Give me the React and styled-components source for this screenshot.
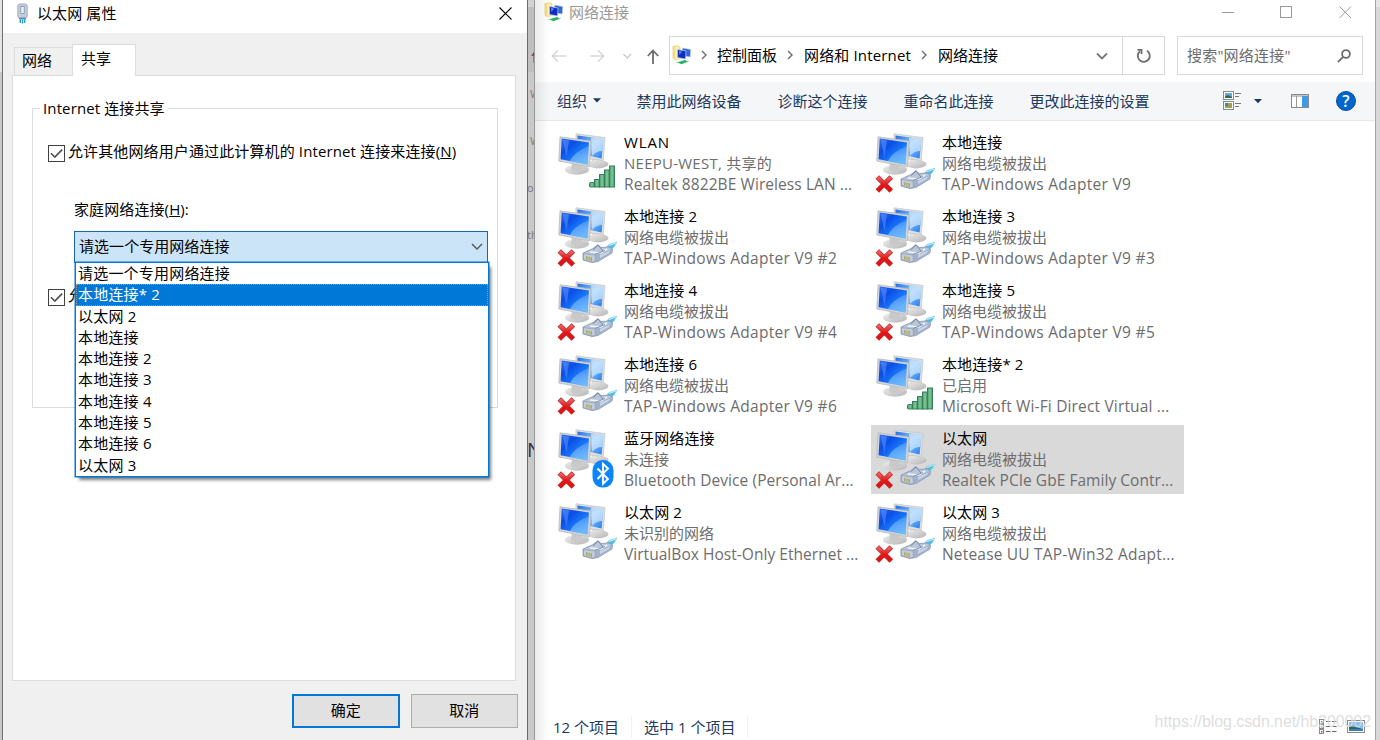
import React, { useState } from 'react';
import styled, { createGlobalStyle, css } from 'styled-components';

const GlobalStyle = createGlobalStyle`
  * {
    box-sizing: border-box;
  }
  body {
    margin: 0;
    font-family: "Open Sans", "Noto Sans CJK SC", sans-serif;
    font-size: 15px;
    color: #000000;
    overflow: hidden;
  }
  svg {
    display: block;
    flex-shrink: 0;
  }
`;

const Desktop = styled.div`
  display: flex;
  width: 1380px;
  height: 740px;
  overflow: hidden;
  background-color: #c6c6c6;
`;

const LeftEdge = styled.div`
  width: 2px;
  background: linear-gradient(#e4e4e4 0 72px, #c9c9c9 72px);
`;

/* ---------- properties dialog ---------- */

const Dialog = styled.div`
  display: flex;
  flex-direction: column;
  width: 526px;
  border-left: 1px solid #707070;
  border-right: 1px solid #6b6b6b;
  background-color: #f0f0f0;
`;

const DialogTitle = styled.div`
  display: flex;
  align-items: center;
  height: 33px;
  padding: 0 15px 6px 13px;
  background-color: #ffffff;
`;

const DialogName = styled.span`
  flex: 1;
  margin-left: 8px;
  line-height: 22px;
  padding-bottom: 1px;
  letter-spacing: 0.1px;
`;

const Tabs = styled.div`
  display: flex;
  align-items: flex-end;
  height: 43px;
  padding-left: 11px;
  margin-bottom: -1px;
  z-index: 1;
`;

const Tab = styled.div`
  width: ${(p) => (p.$active ? 64 : 58)}px;
  height: ${(p) => (p.$active ? 32 : 28)}px;
  margin-bottom: ${(p) => (p.$active ? 0 : 1)}px;
  padding-left: ${(p) => (p.$active ? 8 : 7)}px;
  border: 1px solid #dcdcdc;
  border-bottom: none;
  border-right-width: ${(p) => (p.$active ? 1 : 0)}px;
  background-color: ${(p) => (p.$active ? '#ffffff' : '#f0f0f0')};
  line-height: ${(p) => (p.$active ? 26 : 24)}px;
`;

const TabPanel = styled.div`
  width: 504px;
  height: 606px;
  margin-left: 9px;
  padding: 32px 17px 0 19px;
  border: 1px solid #dcdcdc;
  background-color: #ffffff;
`;

const Group = styled.div`
  display: flex;
  flex-direction: column;
  height: 300px;
  padding-left: 15px;
  border: 1px solid #dcdcdc;
`;

const Legend = styled.div`
  align-self: flex-start;
  height: 22px;
  margin: -11px 0 0 -8px;
  padding: 0 3px;
  line-height: 20px;
  letter-spacing: 0.12px;
  background-color: #ffffff;
`;

const CheckRow = styled.div`
  display: flex;
  align-items: flex-start;
  gap: 3px;
  margin-top: ${(p) => p.$top}px;
  height: 22px;
  line-height: 18px;
  letter-spacing: 0.12px;
  white-space: nowrap;
`;

const CheckBox = styled.div`
  width: 17px;
  height: 17px;
  margin-top: 3px;
  border: 1px solid #404040;
  background-color: #ffffff;
`;

const FieldLabel = styled.div`
  margin: 36px 0 0 26px;
  height: 22px;
  line-height: 19px;
  letter-spacing: 0.1px;
`;

const Combo = styled.div`
  position: relative;
  width: 414px;
  margin: 9px 0 0 26px;
`;

const ComboValue = styled.div`
  display: flex;
  align-items: center;
  justify-content: space-between;
  height: 32px;
  padding: 0 4px;
  border: 1px solid #1a66a8;
  background-color: #cce4f7;

  span {
    padding-bottom: 3px;
    letter-spacing: 0.05px;
  }
`;

const ComboList = styled.div`
  position: absolute;
  top: 31px;
  left: 1px;
  width: 414px;
  height: 215px;
  border: 1px solid #0078d7;
  background-color: #ffffff;
  box-shadow: 0 0 0 0.5px #0078d7, 3px 4px 3px -1px rgba(0, 0, 0, 0.5);
  z-index: 2;
`;

const Option = styled.div`
  height: 21.3px;
  padding-left: 2px;
  line-height: 21.3px;
  letter-spacing: 0.2px;
  ${(p) =>
    p.$active &&
    css`
      color: #ffffff;
      background-color: #0078d7;
      outline: 1px dotted #d28a4b;
      outline-offset: -1px;
    `}
`;

const DialogFooter = styled.div`
  display: flex;
  justify-content: flex-end;
  gap: 11px;
  padding: 13px 9px 0 0;
`;

const DialogButton = styled.button`
  width: 107.5px;
  height: 34px;
  padding: 0 0 3px;
  border: ${(p) => (p.$primary ? '2px solid #0078d7' : '1px solid #adadad')};
  background-color: #e1e1e1;
  font: inherit;
  color: #000000;
`;

/* ---------- strip of the page behind the windows ---------- */

const Gap = styled.div`
  display: flex;
  flex-direction: column;
  width: 7px;
  height: 740px;
  overflow: hidden;
  border-right: 1px solid #999999;
  background: linear-gradient(#d2d2d2 0 7px, #bfbfbf 7px 72px, #c9c9c9 72px);
`;

const GapText = styled.div`
  height: 20px;
  margin-top: ${(p) => p.$top}px;
  margin-left: ${(p) => p.$left || 0}px;
  font-size: ${(p) => p.$size || 11}px;
  line-height: 20px;
  color: ${(p) => p.$color || '#777777'};
`;

const RightEdge = styled.div`
  flex: 1;
  border-left: 1px solid #a5a5a5;
  background: linear-gradient(#e6e6e6 0 7px, #d8d8d8 7px);
`;

/* ---------- explorer window ---------- */

const Explorer = styled.div`
  position: relative;
  display: flex;
  flex-direction: column;
  width: 840px;
  background-color: #ffffff;

  &::before {
    content: '';
    position: absolute;
    top: 0;
    bottom: 0;
    left: 0;
    width: 14px;
    background: linear-gradient(to right, rgba(0, 0, 0, 0.08), rgba(0, 0, 0, 0));
  }
`;

const ExplorerTitle = styled.div`
  display: flex;
  align-items: center;
  height: 24px;
  padding: 0 23px 0 9px;
  color: #999999;
`;

const ExplorerName = styled.span`
  flex: 1;
  margin-left: 5px;
  padding-bottom: 2px;
`;

const WindowButtons = styled.div`
  display: flex;
  gap: 46px;
`;

const AddressRow = styled.div`
  display: flex;
  align-items: center;
  height: 39px;
  margin: 12px 12px 7px 0;
`;

const NavButtons = styled.div`
  display: flex;
  align-items: center;
  width: 134px;
  padding-left: 16px;
`;

const AddressBox = styled.div`
  display: flex;
  align-items: center;
  width: 496px;
  height: 39px;
  border: 1px solid #d9d9d9;
  white-space: nowrap;
`;

const Crumb = styled.span`
  margin-left: ${(p) => p.$left}px;
  padding-bottom: 2px;
  letter-spacing: ${(p) => p.$spacing || 0}px;
`;

const CrumbArrow = styled.svg`
  margin-left: ${(p) => p.$left}px;
  margin-bottom: 2px;
`;

const AddressSpacer = styled.div`
  flex: 1;
`;

const Refresh = styled.div`
  display: flex;
  align-items: center;
  justify-content: center;
  width: 42px;
  height: 37px;
  margin-left: 14px;
  border-left: 1px solid #d9d9d9;
`;

const Search = styled.div`
  display: flex;
  align-items: center;
  justify-content: space-between;
  width: 186px;
  height: 39px;
  margin-left: 12px;
  padding: 0 11px 0 9px;
  border: 1px solid #d9d9d9;
  color: #6d6d6d;

  span {
    padding-bottom: 2px;
    letter-spacing: 0.2px;
  }
`;

const Toolbar = styled.div`
  display: flex;
  align-items: center;
  height: 39px;
  padding: 0 19px 0 22px;
  border-bottom: 1px solid #e5e8ec;
  background-color: #f5f6f7;
  color: #1e395b;
`;

const Command = styled.span`
  display: flex;
  align-items: center;
  gap: 5.5px;
  margin-right: ${(p) => p.$right}px;
  padding-bottom: 2px;
  white-space: nowrap;
`;

const ToolbarIcons = styled.div`
  display: flex;
  flex: 1;
  align-items: center;
  justify-content: flex-end;
`;

const HelpIcon = styled.div`
  width: 20px;
  height: 20px;
  margin-left: 26px;
  border: 1px solid #0a4f9c;
  border-radius: 50%;
  background-color: #0066cc;
  color: #ffffff;
  font-size: 16px;
  font-weight: 600;
  line-height: 18px;
  text-align: center;
`;

const Connections = styled.div`
  display: grid;
  grid-template-columns: 313px 313px;
  grid-auto-rows: 69px;
  gap: 5px;
  flex: 1;
  align-content: start;
  padding: 8px 0 0 18px;
`;

const Connection = styled.div`
  display: flex;
  padding: 3px 0 0 4px;
  background-color: ${(p) => (p.$selected ? '#d9d9d9' : 'transparent')};
`;

const ConnectionText = styled.div`
  margin-left: 7px;
  line-height: 21px;
  white-space: nowrap;
`;

const Name = styled.div`
  letter-spacing: ${(p) => p.$spacing}px;
`;

const Detail = styled.div`
  color: #6d6d6d;
  font-size: ${(p) => p.$size || 15}px;
  letter-spacing: ${(p) => p.$spacing || 0}px;
`;

const StatusBar = styled.div`
  display: flex;
  align-items: center;
  height: 26px;
  padding: 0 10px 0 18px;
  color: #1e395b;
`;

const StatusText = styled.span`
  height: 22px;
  padding-right: 12px;
  margin-right: 12px;
  line-height: 22px;
  border-right: 1px solid #f0f0f0;
`;

const StatusIcons = styled.div`
  display: flex;
  flex: 1;
  justify-content: flex-end;
  gap: 10px;
`;

const Watermark = styled.div`
  position: absolute;
  right: 4px;
  bottom: 7px;
  font-family: "Liberation Sans", sans-serif;
  font-size: 16px;
  line-height: 22px;
  letter-spacing: -0.08px;
  color: rgba(218, 218, 218, 0.9);
`;

/* ---------- icons ---------- */

const Gradients = () => (
  <svg width="0" height="0" style={{ position: 'absolute' }}>
    <defs>
      <linearGradient id="screen" x1="0" y1="0" x2="1" y2="1">
        <stop offset="0" stopColor="#2a6cf0" />
        <stop offset="0.3" stopColor="#0a4ee6" />
        <stop offset="0.6" stopColor="#1a78fa" />
        <stop offset="1" stopColor="#3aa0ff" />
      </linearGradient>
      <linearGradient id="screenBack" x1="0" y1="0" x2="1" y2="1">
        <stop offset="0" stopColor="#1f6fe6" />
        <stop offset="0.5" stopColor="#8fc6fa" />
        <stop offset="1" stopColor="#1f7af2" />
      </linearGradient>
      <linearGradient id="glare" x1="0" y1="0" x2="0" y2="1">
        <stop offset="0" stopColor="#ffffff" stopOpacity="0.08" />
        <stop offset="1" stopColor="#8fd4ff" stopOpacity="0.6" />
      </linearGradient>
      <linearGradient id="metal" x1="0" y1="0" x2="1" y2="1">
        <stop offset="0" stopColor="#efefef" />
        <stop offset="1" stopColor="#b4b4b4" />
      </linearGradient>
      <linearGradient id="bar" x1="0" y1="0" x2="1" y2="0">
        <stop offset="0" stopColor="#3f9a62" />
        <stop offset="0.5" stopColor="#86c99c" />
        <stop offset="1" stopColor="#3f9160" />
      </linearGradient>
      <linearGradient id="cross" gradientUnits="userSpaceOnUse" x1="0" y1="43" x2="0" y2="60">
        <stop offset="0" stopColor="#f07070" />
        <stop offset="0.5" stopColor="#e01818" />
        <stop offset="1" stopColor="#e01010" />
      </linearGradient>
    </defs>
  </svg>
);

const SignalBars = () => (
  <g fill="url(#bar)" stroke="#35805a" strokeWidth="1">
    <rect x="32.5" y="49.5" width="5" height="4.5" rx="1" />
    <rect x="37.5" y="46.5" width="5" height="7.5" />
    <rect x="42.5" y="41.5" width="5" height="12.5" />
    <rect x="47.5" y="37" width="5" height="17" />
    <rect x="52.5" y="33" width="5" height="21" />
  </g>
);

const Plug = () => (
  <g strokeLinejoin="round">
    <path d="M49 41 L52 37.5 L60 35 L57 40 L52.5 44 Z" fill="#4fbce4" stroke="#8ed2e8" strokeWidth="0.7" />
    <path d="M52 38.6 L59 36" stroke="#c8f0fa" strokeWidth="1" />
    <path d="M26 46 L36 41.5 L41 37.5 L44 40.5 L52 40 L55.5 42 L55 46 L41 54.5 L35 55.5 L26 53 Z" fill="#b9c6da" stroke="#8795ac" strokeWidth="0.8" />
    <path d="M39 48 L55 42 L54.5 46 L41 54.3 L38 54 Z" fill="#9fb1cb" />
    <path d="M43 48 L53 43.5 L52 46 L43 51 Z" fill="#c9d6e8" />
    <path d="M26.5 46.5 L38 48 L38.5 54.5 L35 55 L26.5 52.5 Z" fill="#c3cddb" stroke="#8b9ab0" strokeWidth="0.7" />
    <path d="M29 49 L35 50.2 V54 L29 52.3 Z" fill="#aaa878" />
    <path d="M31 49 V53 M33 49.5 V53.5" stroke="#dcd892" strokeWidth="0.7" />
    <path d="M33 45 L44 46 L50 42" fill="none" stroke="#eff4fa" strokeWidth="1.6" />
    <path d="M38 47.5 L48 43.5 M36 42.8 L41 38 L46 44" fill="none" stroke="#73839d" strokeWidth="0.9" />
  </g>
);

const Cross = () => (
  <g fill="none" strokeLinecap="butt">
    <path d="M2.3 43.9 L16.3 57.9 M16.3 43.9 L2.3 57.9" stroke="#c22a2a" strokeWidth="5" />
    <path d="M2.8 44.4 L15.8 57.4 M15.8 44.4 L2.8 57.4" stroke="url(#cross)" strokeWidth="3.6" />
  </g>
);

const Bluetooth = () => (
  <g>
    <rect x="35.5" y="31" width="21" height="27.6" rx="10" fill="#0a84ff" />
    <path d="M40.5 39.5 L51 50 L46 54.8 V34.8 L51 39.5 L40.5 50" fill="none" stroke="#ffffff" strokeWidth="1.9" />
  </g>
);

const NetworkIcon = ({ kind, off }) => (
  <svg width="60" height="62" viewBox="0 -1 60 62">
    <path d="M36 24 L43 26 L45 31 L34 32 Z" fill="#c4c4c4" />
    <ellipse cx="41" cy="31" rx="10.5" ry="4.4" fill="url(#metal)" />
    <path d="M19 0.8 L48 4.6 L46.3 27.3 L33 26 L19 21 Z" fill="#e0e0e0" stroke="#c4c7ca" strokeWidth="0.8" />
    <path d="M20.5 2.6 L46.4 6 L44.6 25.4 L20.5 20 Z" fill="url(#screenBack)" />
    <path d="M34 4.4 L46.4 6 L45.2 18 Q39 18 35 23 Z" fill="#d5ebfd" opacity="0.7" />
    <ellipse cx="20" cy="36.8" rx="12" ry="5" fill="url(#metal)" />
    <path d="M15 30 L24 32.5 L26 37 Q20 40 14 37 Z" fill="#c9c9c9" />
    <path d="M3 3.8 L34 8 L32.4 33.8 L1.8 28 Z" fill="#d3d5d7" stroke="#b6b9bc" strokeWidth="0.8" />
    <path d="M4.7 5.6 L32 9.5 L30.6 31.6 L3.6 26.2 Z" fill="url(#screen)" />
    <path d="M32 9.5 L30.6 31.6 L13 28.1 Q17 19 32 13 Z" fill="url(#glare)" />
    <path d="M5.5 6.5 L12 7.5 L9.5 24 Z" fill="#77a8ff" opacity="0.4" />
    {kind === 'wifi' && <SignalBars />}
    {kind === 'lan' && <Plug />}
    {kind === 'bluetooth' && <Bluetooth />}
    {off && <Cross />}
  </svg>
);

const FolderIcon = () => (
  <svg width="20" height="20" viewBox="0 0 20 20">
    <path d="M0.5 1 L6 0.3 L8.5 2 V13.5 L3 15.5 L0.5 13 Z" fill="#f0da88" />
    <path d="M3 2 L7 1.5 V13 L3 15 Z" fill="#faeeb4" />
    <path d="M10.5 3 L18.8 4.5 L18.3 12 L10.5 11 Z" fill="#2f66dc" stroke="#c9d2dc" strokeWidth="0.7" />
    <path d="M5.5 4.5 L14 6 L13.5 14 L5.5 12.5 Z" fill="#0c2fc0" stroke="#c3ccd8" strokeWidth="0.7" />
    <path d="M7 6 L10 6.6 L7.5 10 Z" fill="#5d8bf5" />
    <path d="M4 17 L8 18 M13 18 L17 16" fill="none" stroke="#c9cfd3" strokeWidth="1.2" />
    <path d="M5.5 17.2 L13 15 L15.5 16.5 L9.5 19.2 Z" fill="#1fb45a" />
  </svg>
);

const EthernetIcon = () => (
  <svg width="13" height="22" viewBox="0 0 13 22">
    <rect x="1.8" y="1" width="9.4" height="14" rx="2" fill="#c3cddd" stroke="#a5b0c3" />
    <rect x="4.8" y="3.5" width="3.4" height="7" fill="#eef2f8" stroke="#8290a9" strokeWidth="0.8" />
    <path d="M3 15.5 H10" stroke="#6f879f" strokeWidth="1.6" />
    <path d="M4.3 16.3 V20 M6.5 16.3 V20.5 M8.7 16.3 V20" stroke="#25a3d8" strokeWidth="1.5" />
  </svg>
);

const Tick = () => (
  <svg width="15" height="15" viewBox="0 0 15 15">
    <path d="M2 7.2 L5.8 11 L13.2 3.6" fill="none" stroke="#505050" strokeWidth="1.6" />
  </svg>
);

const Caret = () => (
  <svg width="8" height="5" viewBox="0 0 8 5">
    <path d="M0 0.3 H8 L4 4.6 Z" fill="#1e395b" />
  </svg>
);

const Chevron = ({ left }) => (
  <CrumbArrow $left={left} width="6" height="10" viewBox="0 0 6 10">
    <path d="M1 1 L5 5 L1 9" fill="none" stroke="#6d6d6d" strokeWidth="1.4" />
  </CrumbArrow>
);

const options = [
  '请选一个专用网络连接',
  '本地连接* 2',
  '以太网 2',
  '本地连接',
  '本地连接 2',
  '本地连接 3',
  '本地连接 4',
  '本地连接 5',
  '本地连接 6',
  '以太网 3',
];

// spacing: letter spacing of the device line
const connections = [
  { name: 'WLAN', state: 'NEEPU-WEST, 共享的', device: 'Realtek 8822BE Wireless LAN ...', kind: 'wifi', spacing: 0.08 },
  { name: '本地连接', state: '网络电缆被拔出', device: 'TAP-Windows Adapter V9', kind: 'lan', off: true, spacing: 0.3 },
  { name: '本地连接 2', state: '网络电缆被拔出', device: 'TAP-Windows Adapter V9 #2', kind: 'lan', off: true, spacing: 0.3 },
  { name: '本地连接 3', state: '网络电缆被拔出', device: 'TAP-Windows Adapter V9 #3', kind: 'lan', off: true, spacing: 0.3 },
  { name: '本地连接 4', state: '网络电缆被拔出', device: 'TAP-Windows Adapter V9 #4', kind: 'lan', off: true, spacing: 0.3 },
  { name: '本地连接 5', state: '网络电缆被拔出', device: 'TAP-Windows Adapter V9 #5', kind: 'lan', off: true, spacing: 0.3 },
  { name: '本地连接 6', state: '网络电缆被拔出', device: 'TAP-Windows Adapter V9 #6', kind: 'lan', off: true, spacing: 0.3 },
  { name: '本地连接* 2', state: '已启用', device: 'Microsoft Wi-Fi Direct Virtual ...', kind: 'wifi', spacing: 0.16 },
  { name: '蓝牙网络连接', state: '未连接', device: 'Bluetooth Device (Personal Ar...', kind: 'bluetooth', off: true, spacing: 0.08 },
  { name: '以太网', state: '网络电缆被拔出', device: 'Realtek PCIe GbE Family Contr...', kind: 'lan', off: true, spacing: 0.04 },
  { name: '以太网 2', state: '未识别的网络', device: 'VirtualBox Host-Only Ethernet ...', kind: 'lan', spacing: 0.04 },
  { name: '以太网 3', state: '网络电缆被拔出', device: 'Netease UU TAP-Win32 Adapt...', kind: 'lan', off: true, spacing: 0.19 },
];

const PropertiesDialog = () => {
  const [active, setActive] = useState(1);

  return (
    <Dialog>
      <DialogTitle>
        <EthernetIcon />
        <DialogName>以太网 属性</DialogName>
        <svg width="13" height="13" viewBox="0 0 13 13">
          <path d="M0.5 0.5 L12.5 12.5 M12.5 0.5 L0.5 12.5" stroke="#000000" strokeWidth="1.1" />
        </svg>
      </DialogTitle>
      <Tabs>
        <Tab>网络</Tab>
        <Tab $active>共享</Tab>
      </Tabs>
      <TabPanel>
        <Group>
          <Legend>Internet 连接共享</Legend>
          <CheckRow $top={22}>
            <CheckBox><Tick /></CheckBox>
            <span>允许其他网络用户通过此计算机的 Internet 连接来连接(<u>N</u>)</span>
          </CheckRow>
          <FieldLabel>家庭网络连接(<u>H</u>):</FieldLabel>
          <Combo>
            <ComboValue>
              <span>{options[0]}</span>
              <svg width="12" height="8" viewBox="0 0 12 8">
                <path d="M1 1 L6 6 L11 1" fill="none" stroke="#555555" strokeWidth="1.4" />
              </svg>
            </ComboValue>
            <ComboList>
              {options.map((text, i) => (
                <Option key={text} $active={i === active} onMouseEnter={() => setActive(i)}>{text}</Option>
              ))}
            </ComboList>
          </Combo>
          <CheckRow $top={23}>
            <CheckBox><Tick /></CheckBox>
            <span>允</span>
          </CheckRow>
        </Group>
      </TabPanel>
      <DialogFooter>
        <DialogButton $primary>确定</DialogButton>
        <DialogButton>取消</DialogButton>
      </DialogFooter>
    </Dialog>
  );
};

const ConnectionsWindow = () => {
  const [selected, setSelected] = useState('以太网');

  return (
    <Explorer>
      <ExplorerTitle>
        <FolderIcon />
        <ExplorerName>网络连接</ExplorerName>
        <WindowButtons>
          <svg width="13" height="13" viewBox="0 0 13 13"><path d="M1 6.5 H13" stroke="#999999" /></svg>
          <svg width="13" height="13" viewBox="0 0 13 13"><rect x="0.5" y="0.5" width="11" height="11" fill="none" stroke="#999999" /></svg>
          <svg width="13" height="13" viewBox="0 0 13 13"><path d="M0.5 0.5 L12 12 M12 0.5 L0.5 12" stroke="#999999" /></svg>
        </WindowButtons>
      </ExplorerTitle>
      <AddressRow>
        <NavButtons>
          <svg width="110" height="16" viewBox="0 0 110 16" fill="none" strokeWidth="1.5">
            <path d="M15 8 H1 M7 2.5 L1.2 8 L7 13.5" stroke="#d6d6d6" />
            <path d="M39 8 H53 M47 2.5 L52.8 8 L47 13.5" stroke="#d6d6d6" />
            <path d="M72.5 6 L76.3 10 L80.1 6" stroke="#cccccc" />
            <path d="M102 16 V2.5 M96.8 8 L102 2.5 L107.2 8" stroke="#6d6d6d" strokeWidth="1.8" />
          </svg>
        </NavButtons>
        <AddressBox>
          <Crumb $left={2}><FolderIcon /></Crumb>
          <Chevron left={9} />
          <Crumb $left={10}>控制面板</Crumb>
          <Chevron left={10} />
          <Crumb $left={11} $spacing={0.15}>网络和 Internet</Crumb>
          <Chevron left={10} />
          <Crumb $left={11}>网络连接</Crumb>
          <AddressSpacer />
          <svg width="12" height="8" viewBox="0 0 12 8">
            <path d="M1 1.5 L6 6.5 L11 1.5" fill="none" stroke="#777777" strokeWidth="1.8" />
          </svg>
          <Refresh>
            <svg width="16" height="16" viewBox="0 0 16 16" fill="none" stroke="#6d6d6d" strokeWidth="1.8">
              <path d="M11 2.8 A6 6 0 1 1 4 3.2" />
              <path d="M1.5 1.8 H5.5 V6" />
            </svg>
          </Refresh>
        </AddressBox>
        <Search>
          <span>搜索"网络连接"</span>
          <svg width="14" height="14" viewBox="0 0 14 14" fill="none" stroke="#6d6d6d" strokeWidth="1.8">
            <circle cx="9" cy="5" r="3.9" />
            <path d="M6.2 7.8 L0.8 13.2" />
          </svg>
        </Search>
      </AddressRow>
      <Toolbar>
        <Command $right={36}>组织 <Caret /></Command>
        <Command $right={36}>禁用此网络设备</Command>
        <Command $right={36}>诊断这个连接</Command>
        <Command $right={36}>重命名此连接</Command>
        <Command $right={0}>更改此连接的设置</Command>
        <ToolbarIcons>
          <svg width="87" height="20" viewBox="0 0 87 20">
            <rect x="0.5" y="0.5" width="10" height="8" fill="#ffffff" stroke="#8a8a8a" />
            <rect x="2" y="2" width="7" height="5" fill="#69a7dd" />
            <path d="M2 5.5 L5 4 L9 6 V7 H2 Z" fill="#2e6a51" />
            <rect x="0.5" y="10.5" width="10" height="8" fill="#ffffff" stroke="#8a8a8a" />
            <rect x="2" y="12" width="7" height="5" fill="#72b85a" />
            <rect x="2" y="12" width="3" height="3" fill="#3b82c4" />
            <rect x="5" y="14" width="3" height="2" fill="#d8862c" />
            <path d="M12 2.5 H18 M12 5.5 H16 M12 12.5 H18 M12 15.5 H16" stroke="#777777" />
            <path d="M31 8 H39 L35 12.3 Z" fill="#1e395b" />
            <rect x="68.5" y="3.5" width="17" height="13" fill="#ffffff" stroke="#8a8a8a" />
            <path d="M68.5 5 H86" stroke="#8a8a8a" />
            <path d="M73.5 5 V16" stroke="#9a9a9a" />
            <rect x="79" y="5" width="6" height="11" fill="#3f9be6" />
          </svg>
          <HelpIcon>?</HelpIcon>
        </ToolbarIcons>
      </Toolbar>
      <Connections>
        {connections.map((c) => (
          <Connection key={c.name} $selected={c.name === selected} onClick={() => setSelected(c.name)}>
            <NetworkIcon kind={c.kind} off={c.off} />
            <ConnectionText>
              <Name $spacing={c.name === 'WLAN' ? 0.9 : 0.1}>{c.name}</Name>
              <Detail $spacing={c.name === 'WLAN' ? 0.25 : 0}>{c.state}</Detail>
              <Detail $size={15.5} $spacing={c.spacing}>{c.device}</Detail>
            </ConnectionText>
          </Connection>
        ))}
      </Connections>
      <StatusBar>
        <StatusText>12 个项目</StatusText>
        <StatusText>选中 1 个项目</StatusText>
        <StatusIcons>
          <svg width="18" height="16" viewBox="0 0 18 16">
            <g fill="#ffffff" stroke="#8a8a8a">
              <rect x="0.5" y="0.5" width="4" height="4" />
              <rect x="0.5" y="5.5" width="4" height="4" />
              <rect x="0.5" y="10.5" width="4" height="4" />
            </g>
            <rect x="2" y="2" width="1.5" height="1.5" fill="#3b82c4" />
            <rect x="2" y="7" width="1.5" height="1.5" fill="#4d9a4d" />
            <rect x="2" y="12" width="1.5" height="1.5" fill="#d03030" />
            <path d="M7 2.5 H17.5 M7 7.5 H17.5 M7 12.5 H17.5" stroke="#666666" strokeDasharray="4.5 1.5" />
          </svg>
          <svg width="18" height="16" viewBox="0 0 18 16">
            <rect x="0.5" y="1.5" width="17" height="12" fill="#ffffff" stroke="#8a8a8a" />
            <rect x="2" y="3" width="14" height="9" fill="#8cc0f2" />
            <path d="M2 7 L8 8 L16 10 H2 Z" fill="#2e6a51" />
            <rect x="2" y="10" width="14" height="2" fill="#3d7fc4" />
          </svg>
        </StatusIcons>
      </StatusBar>
      <Watermark>https://blog.csdn.net/hb200002</Watermark>
    </Explorer>
  );
};

const App = () => {
  return (
    <Desktop>
      <GlobalStyle />
      <Gradients />
      <LeftEdge />
      <PropertiesDialog />
      <Gap>
        <GapText $top={46} $left={3} $size={14} $color="#5a3a4a">作</GapText>
        <GapText $top={18} $left={2}>W</GapText>
        <GapText $top={27} $left={2}>W</GapText>
        <GapText $top={27} $left={-1}>or</GapText>
        <GapText $top={27} $left={-1}>th</GapText>
        <GapText $top={195} $left={-1} $size={20} $color="#333344">N</GapText>
      </Gap>
      <ConnectionsWindow />
      <RightEdge />
    </Desktop>
  );
};

export default App;
